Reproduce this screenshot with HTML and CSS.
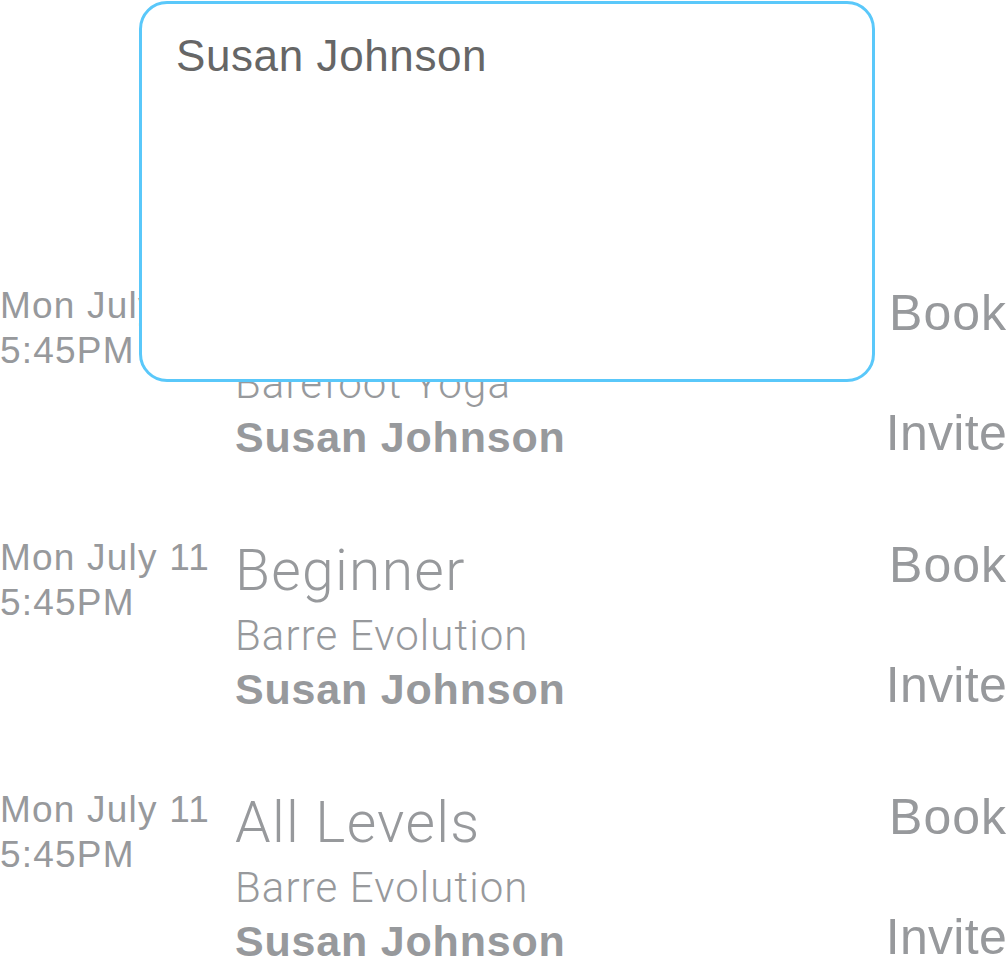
FILE: index.html
```html
<!DOCTYPE html>
<html lang="en">
<head>
<meta charset="utf-8">
<title>Classes</title>
<link rel="stylesheet" href="styles.css">
</head>
<body>
<div class="page">
  <div class="list">
    <div class="row">
      <div class="when">
        <div class="date">Mon July 11</div>
        <div class="time">5:45PM</div>
      </div>
      <div class="info">
        <div class="title">Vinyasa Flow</div>
        <div class="studio">Barefoot Yoga</div>
        <div class="teacher">Susan Johnson</div>
      </div>
      <div class="actions">
        <div class="action">Book</div>
        <div class="action">Invite</div>
      </div>
    </div>
    <div class="row">
      <div class="when">
        <div class="date">Mon July 11</div>
        <div class="time">5:45PM</div>
      </div>
      <div class="info">
        <div class="title">Beginner</div>
        <div class="studio">Barre Evolution</div>
        <div class="teacher">Susan Johnson</div>
      </div>
      <div class="actions">
        <div class="action">Book</div>
        <div class="action">Invite</div>
      </div>
    </div>
    <div class="row">
      <div class="when">
        <div class="date">Mon July 11</div>
        <div class="time">5:45PM</div>
      </div>
      <div class="info">
        <div class="title">All Levels</div>
        <div class="studio">Barre Evolution</div>
        <div class="teacher">Susan Johnson</div>
      </div>
      <div class="actions">
        <div class="action">Book</div>
        <div class="action">Invite</div>
      </div>
    </div>
  </div>
  <div class="popup">
    <div class="popup-text">Susan Johnson</div>
  </div>
</div>
</body>
</html>
```

FILE: styles.css
```css
html, body {
  margin: 0;
  padding: 0;
  background: #ffffff;
}

body {
  font-family: "Liberation Sans", Arial, sans-serif;
  color: #97999c;
}

.page {
  position: relative;
  width: 1008px;
  height: 978px;
  overflow: hidden;
}

.list {
  padding-top: 283px;
}

.row {
  display: flex;
  height: 252px;
}

.when {
  width: 235px;
  flex: none;
  font-size: 37px;
  line-height: 45px;
  letter-spacing: 1.2px;
  white-space: nowrap;
}

.info {
  flex: 1;
  min-width: 0;
}

.title {
  font-family: Roboto, "Liberation Sans", sans-serif;
  font-weight: 300;
  font-size: 57px;
  line-height: 72px;
  letter-spacing: 1.3px;
  white-space: nowrap;
}

.studio {
  font-family: Roboto, "Liberation Sans", sans-serif;
  font-weight: 300;
  font-size: 42px;
  line-height: 58px;
  letter-spacing: 1.1px;
  white-space: nowrap;
}

.teacher {
  font-weight: 700;
  font-size: 43px;
  line-height: 49px;
  letter-spacing: 0.8px;
  white-space: nowrap;
}

.actions {
  display: flex;
  flex-direction: column;
  align-items: flex-end;
  gap: 60px;
  font-size: 50px;
  line-height: 60px;
}

.action {
  letter-spacing: 1px;
  margin-right: 1px;
}

.action + .action {
  letter-spacing: 0.3px;
}

.popup {
  position: absolute;
  left: 139px;
  top: 1px;
  width: 736px;
  height: 381px;
  box-sizing: border-box;
  border: 3px solid #5ac8fa;
  border-radius: 28px;
  background: #ffffff;
  padding: 26px 34px 0 34px;
}

.popup-text {
  font-size: 44px;
  line-height: 52px;
  letter-spacing: 0.6px;
  color: #666666;
}
```
